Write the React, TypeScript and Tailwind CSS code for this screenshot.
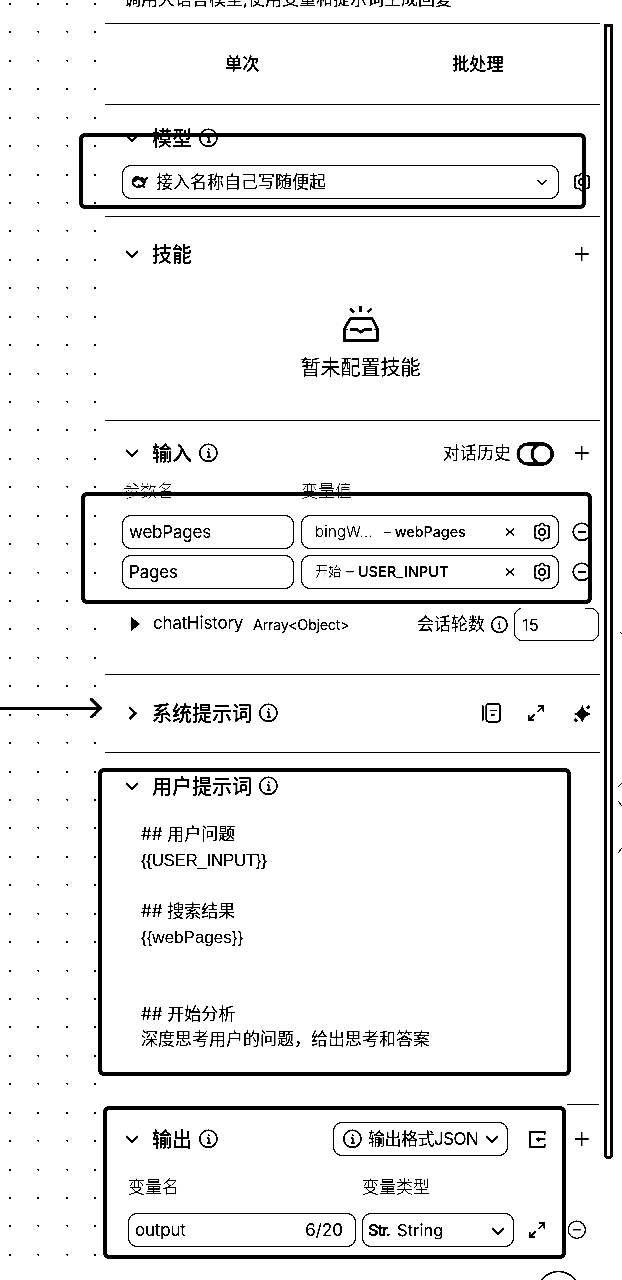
import React from "react";

type IconProps = { className?: string };

const Svg = ({ size, className = "", children, sw = 1.7 }: { size: number; className?: string; children: React.ReactNode; sw?: number }) => (
  <svg width={size} height={size} viewBox={`0 0 ${size} ${size}`} fill="none" stroke="black" strokeWidth={sw} className={`shrink-0 ${className}`}>
    {children}
  </svg>
);

const Down = ({ className }: IconProps) => (
  <Svg size={14} sw={2.4} className={className}><path d="M1 4.2 7 10 13 4.2" /></Svg>
);
const Right = ({ className }: IconProps) => (
  <Svg size={14} sw={2.4} className={className}><path d="M4.5 1.5 10.5 7.2 4.5 13" /></Svg>
);
const Info = ({ size = 20, className }: { size?: number; className?: string }) => (
  <svg width={size} height={size} viewBox="0 0 20 20" fill="none" stroke="black" className={`shrink-0 ${className ?? ""}`}>
    <circle cx="10.4" cy="9.8" r="8.6" strokeWidth="1.6" />
    <path d="M9 8.8h1.8v5M8.6 14h4" strokeWidth="1.3" />
    <circle cx="10.6" cy="6.2" r="1" fill="black" stroke="none" />
  </svg>
);
const Plus = ({ className }: IconProps) => (
  <Svg size={16} sw={1.6} className={className}><path d="M7.6 1v14M.6 8h14" /></Svg>
);
const Minus = ({ className, sw = 1.6 }: IconProps & { sw?: number }) => (
  <Svg size={20} sw={sw} className={className}><circle cx="9.8" cy="9.8" r="8.6" /><path d="M6 9.8h8" /></Svg>
);
const Close = ({ className }: IconProps) => (
  <Svg size={10} sw={1.4} className={className}><path d="M1 1.2 9 8.8M9 1.2 1 8.8" /></Svg>
);
const Gear = ({ className }: IconProps) => (
  <Svg size={20} sw={1.6} className={className}>
    <path d="M10 1.2Q11.6 1.4 12.6 3.6 15 3.2 16.8 4 18 5.4 17 7.6 16.2 8.8 17.6 10 16.2 11.2 17 12.4 18 14.6 16.8 16 15 16.8 12.6 16.4 11.6 18.6 10 18.8 8.4 18.6 7.4 16.4 5 16.8 3.2 16 2 14.6 3 12.4 3.8 11.2 2.4 10 3.8 8.8 3 7.6 2 5.4 3.2 4 5 3.2 7.4 3.6 8.4 1.4 10 1.2Z" strokeLinejoin="round" />
    <circle cx="10" cy="10" r="3" />
  </Svg>
);
const Expand = ({ className }: IconProps) => (
  <Svg size={18} sw={1.7} className={className}>
    <path d="M11 2h5.4v5.4M16 2.4 10.4 8M7 16.4H1.6V11M2 16 7.6 10.4" />
  </Svg>
);
const Library = ({ className }: IconProps) => (
  <Svg size={20} sw={1.7} className={className}>
    <path d="M1.9 2.4v15" /><rect x="5.4" y="1" width="13.4" height="17.6" rx="1.6" />
    <path d="M9 7.6h7M9.8 11.8h4M10.6 12.6h2" strokeWidth="1.5" />
  </Svg>
);
const Sparkle = ({ className }: IconProps) => (
  <svg width="20" height="20" viewBox="0 0 20 20" className={`shrink-0 ${className ?? ""}`}>
    <path d="M10.2 4Q11.5 9 17.3 11Q11.5 13 10.2 18.4Q8.9 13 3.1 11Q8.9 9 10.2 4Z" stroke="black" strokeWidth="1.2" />
    <path d="M16.4 2 18.6 4.2 16.4 6.4 14.2 4.2ZM3.7 14.9 6 17.2 3.7 19.5 1.4 17.2Z" />
  </svg>
);
const Import = ({ className }: IconProps) => (
  <Svg size={18} sw={1.7} className={className}>
    <path d="M16.6 4.6V1.6H1.8v15.2h14.8V14M17.4 9.2H9M11.2 7.4 9 9.2l2.2 1.8" />
  </Svg>
);
const Inbox = () => (
  <svg width="40" height="40" viewBox="0 0 40 40" fill="none" stroke="black" strokeWidth="2.6" strokeLinejoin="round">
    <path d="M9.4 15.5h21.6l5.6 10.7v11.2H3.2V26.2Z" />
    <path d="M3 26.4h4M33 26.4h4" strokeWidth="1.4" />
    <path d="M9 26.2h6.6l4.2 3 4.2-3h7" />
    <path d="M19.8 3v6M9.2 5.6l4 3.6M30.6 5.6l-4 3.6" />
  </svg>
);
const Whale = () => (
  <svg width="18" height="16" viewBox="0 0 18 16" fill="none" stroke="black">
    <path d="M1.4 8C1.4 4 4.4 2.6 7.6 3.4 10 4 10.6 7.6 12.6 9M1.4 8C2 12.4 6.6 14 11 12.2" strokeWidth="1.7" />
    <path d="M2.4 4.6Q5 2.6 8 4L9.4 6.6 6 6 4.6 7.6 2.4 8ZM6.6 10l3 1 1.6 1.6-3 .6Z" fill="black" stroke="none" />
    <path d="M11 3c.4 2 1.4 2.6 2.6 2.6C15 5.4 15.6 4 17 3.6M13.6 5.6c.4 3-.6 5-2 6.6l2.6 1" strokeWidth="1.8" />
  </svg>
);

const Heading = ({ title, info = true, open = true, children }: { title: string; info?: boolean; open?: boolean; children?: React.ReactNode }) => (
  <div className="flex h-7 items-center pl-5">
    {open ? <Down /> : <Right />}
    <span className="ml-[13px] mt-px text-[20px] font-medium">{title}</span>
    {info && <Info className="ml-1.5" />}
    <div className="flex-1" />
    {children}
  </div>
);

const Param = ({ name, children }: { name: string; children: React.ReactNode }) => (
  <div className="flex h-[34px] items-center">
    <div className="flex h-full w-[172px] items-center rounded-[9px] border border-black pl-1.5 pt-0.5 text-[17px] tracking-[-0.2px]">{name}</div>
    <div className="ml-[7px] flex h-full w-[258px] items-center rounded-[9px] border border-black pl-[13px] pr-[6px]">
      {children}
      <Close className="ml-auto" />
      <Gear className="ml-[17px]" />
    </div>
    <Minus className="ml-[13px]" />
  </div>
);

const Dots = () => (
  <svg width="100" height="1280" className="absolute left-0 top-0" shapeRendering="crispEdges">
    {Array.from({ length: 45 }, (_, r) =>
      [9, 37, 66, 94].map((x, c) => {
        const y = Math.round(3 + r * 28.43);
        const faint = c === 1 || c === 2;
        return (
          <path
            key={`${r}-${x}`}
            d={faint && r % 3 ? `M${x} ${y}h2v2h-1v-1h-1z` : `M${x} ${y}h2v2h-2z`}
          />
        );
      })
    )}
  </svg>
);

const Frame = ({ className }: { className: string }) => (
  <div className={`pointer-events-none absolute rounded-[6px] border-4 border-black ${className}`} />
);

export default function App() {
  return (
    <div className="relative h-[1280px] w-[622px] overflow-hidden bg-white font-['Inter','Noto_Sans_CJK_SC',sans-serif] text-black brightness-[0.85] contrast-[8]">
      <Dots />
      <main className="ml-[105px] flex w-[495px] flex-col">
        <header className="relative h-6 overflow-hidden border-b border-black">
          <p className="-mt-[13px] ml-[19px] whitespace-nowrap text-[17px] leading-6">调用大语言模型,使用变量和提示词生成回复</p>
        </header>

        <nav className="flex h-[81px] items-center border-b border-black text-[17.3px] font-medium">
          <span className="ml-[120px] w-[227px]">单次</span>
          <span>批处理</span>
        </nav>

        <section className="h-[112px] border-b border-black pt-[19px]">
          <Heading title="模型" />
          <div className="mt-[13px] flex items-center pl-[17px]">
            <div className="flex h-[34px] w-[437px] items-center rounded-[9px] border border-black pl-2 pr-[10px]">
              <Whale />
              <span className="ml-[7px] mt-0.5 text-[17px]">接入名称自己写随便起</span>
              <Svg size={12} sw={1.6} className="ml-auto"><path d="M1.6 4 6 8.4 10.4 4" /></Svg>
            </div>
            <Gear className="ml-[13px]" />
          </div>
        </section>

        <section className="h-[204px] border-b border-black pt-[23px]">
          <Heading title="技能" info={false}><Plus className="mr-[10px]" /></Heading>
          <div className="mt-[35px] flex flex-col items-center pl-[16px]">
            <Inbox />
            <p className="mt-[11px] text-[20px] leading-7">暂未配置技能</p>
          </div>
        </section>

        <section className="h-[254px] border-b border-black pt-[18px]">
          <Heading title="输入">
            <span className="mt-0.5 text-[17px]">对话历史</span>
            <svg width="38" height="24" viewBox="0 0 38 24" fill="none" stroke="black" strokeWidth="2.8" className="ml-[5px] mt-px">
              <rect x="2" y="2" width="34.4" height="20" rx="10" />
              <circle cx="26" cy="12" r="10" />
            </svg>
            <Plus className="ml-[20px] mr-[10px]" />
          </Heading>
          <div className="mt-3 flex h-[26px] pl-[18px] text-[17px] font-thin leading-6">
            <span className="w-[178px]">参数名</span>
            <span>变量值</span>
          </div>
          <div className="mt-[10px] flex flex-col gap-[6px] pl-[17px]">
            <Param name="webPages">
              <span className="text-[15px] font-light tracking-[0.2px]">bingW...</span>
              <span className="ml-[11px] text-[14.3px] font-medium">– webPages</span>
            </Param>
            <Param name="Pages">
              <span className="text-[13.2px] font-light">开始</span>
              <span className="ml-[5px] text-[14.7px] font-medium">– USER_INPUT</span>
            </Param>
          </div>
          <div className="mt-[19px] flex h-8 items-center pl-[26px]">
            <svg width="9" height="14" viewBox="0 0 9 14"><path d="M0 0 9 7 0 14Z" /></svg>
            <span className="ml-[13px] w-[100px] text-[17px] tracking-[-0.2px]">chatHistory</span>
            <span className="w-[164px] pt-px text-[14.5px] tracking-[-0.35px]">Array&lt;Object&gt;</span>
            <span className="mt-0.5 whitespace-nowrap text-[17px]">会话轮数</span>
            <Info size={18} className="ml-[5px] mt-px" />
            <div className="relative ml-[6px] flex h-[33px] w-[85px] shrink-0 items-center rounded-[8px] border border-black pl-[7px] pt-0.5 text-[16.5px]">
              15
              <div className="absolute -top-px left-1.5 h-px w-16 bg-white" />
            </div>
          </div>
        </section>

        <section className="h-[78px] border-b border-black pt-[24px]">
          <Heading title="系统提示词" open={false}>
            <Library />
            <Expand className="ml-[26px]" />
            <Sparkle className="ml-[27px] mr-[8px]" />
          </Heading>
        </section>

        <section className="h-[351px] pt-[19px]">
          <Heading title="用户提示词" />
          <div className="mt-[22px] whitespace-pre pl-9 text-[17px] leading-[25.65px]">
            <p>## 用户问题</p>
            <p className="font-['Liberation_Sans'] tracking-[-0.35px]">{"{{USER_INPUT}}"}</p>
            <p>&nbsp;</p>
            <p>## 搜索结果</p>
            <p className="font-['Liberation_Sans']">{"{{webPages}}"}</p>
            <p>&nbsp;</p>
            <p>&nbsp;</p>
            <p>## 开始分析</p>
            <p>深度思考用户的问题，给出思考和答案</p>
          </div>
        </section>

        <section>
          <div className="ml-[462px] h-px w-8 bg-black" />
          <div className="pt-[20px]">
            <Heading title="输出">
              <div className="flex h-[34px] w-[175px] items-center rounded-[9px] border border-black pl-2 text-[17px]">
                <Info />
                <span className="ml-1.5 mt-px whitespace-nowrap tracking-[-0.5px]">输出格式JSON</span>
                <Down className="ml-auto mr-2" />
              </div>
              <Import className="ml-[20px]" />
              <Plus className="ml-[28px] mr-[10px]" />
            </Heading>
          </div>
          <div className="mt-[22px] flex pl-[23px] text-[17px] font-light leading-6">
            <span className="w-[234px]">变量名</span>
            <span>变量类型</span>
          </div>
          <div className="mt-[14px] flex h-[34px] items-center pl-[23px]">
            <div className="flex h-full w-[228px] items-center justify-between rounded-[9px] border border-black pl-1.5 pr-3 pt-0.5 text-[17px]">
              <span className="tracking-[-0.2px]">output</span>
              <span>6/20</span>
            </div>
            <div className="ml-1.5 flex h-full w-[152px] items-center rounded-[9px] border border-black px-[5px] pt-px text-[16.5px]">
              <span className="w-[23px] font-['Roboto'] text-[17px] font-semibold tracking-[-1px]">Str.</span>
              <span className="ml-[6px]">String</span>
              <Down className="ml-auto mr-[3px]" />
            </div>
            <Expand className="ml-[14px]" />
            <Minus className="ml-[21px]" sw={1.2} />
          </div>
        </section>
      </main>

      <Frame className="left-[79px] top-[133px] h-[76px] w-[507px]" />
      <Frame className="left-[81px] top-[492px] h-[112px] w-[511px]" />
      <Frame className="left-[98px] top-[768px] h-[308px] w-[473px]" />
      <Frame className="left-[103px] top-[1106px] h-[153px] w-[463px]" />
      <div className="absolute left-[604px] top-[24px] h-[1135px] w-[9px] rounded-b-[4px] border-[3px] border-black" />

      <svg width="104" height="24" className="absolute left-0 top-[696px]" fill="none" stroke="black" strokeWidth="2.8">
        <path d="M0 12.5H99M90.5 2.5 100.5 12.5 90.5 21.5" />
      </svg>
      <svg width="6" height="240" className="absolute left-[617px] top-[620px]" fill="none" stroke="black">
        <path d="M3 12 5 14M1 167 5 163M1 181 5 186M1 233 5 228" />
      </svg>
      <svg width="44" height="12" className="absolute left-[536px] top-[1268px]" fill="none" stroke="black" strokeWidth="1.3">
        <circle cx="22.5" cy="24" r="20.5" />
      </svg>
    </div>
  );
}
